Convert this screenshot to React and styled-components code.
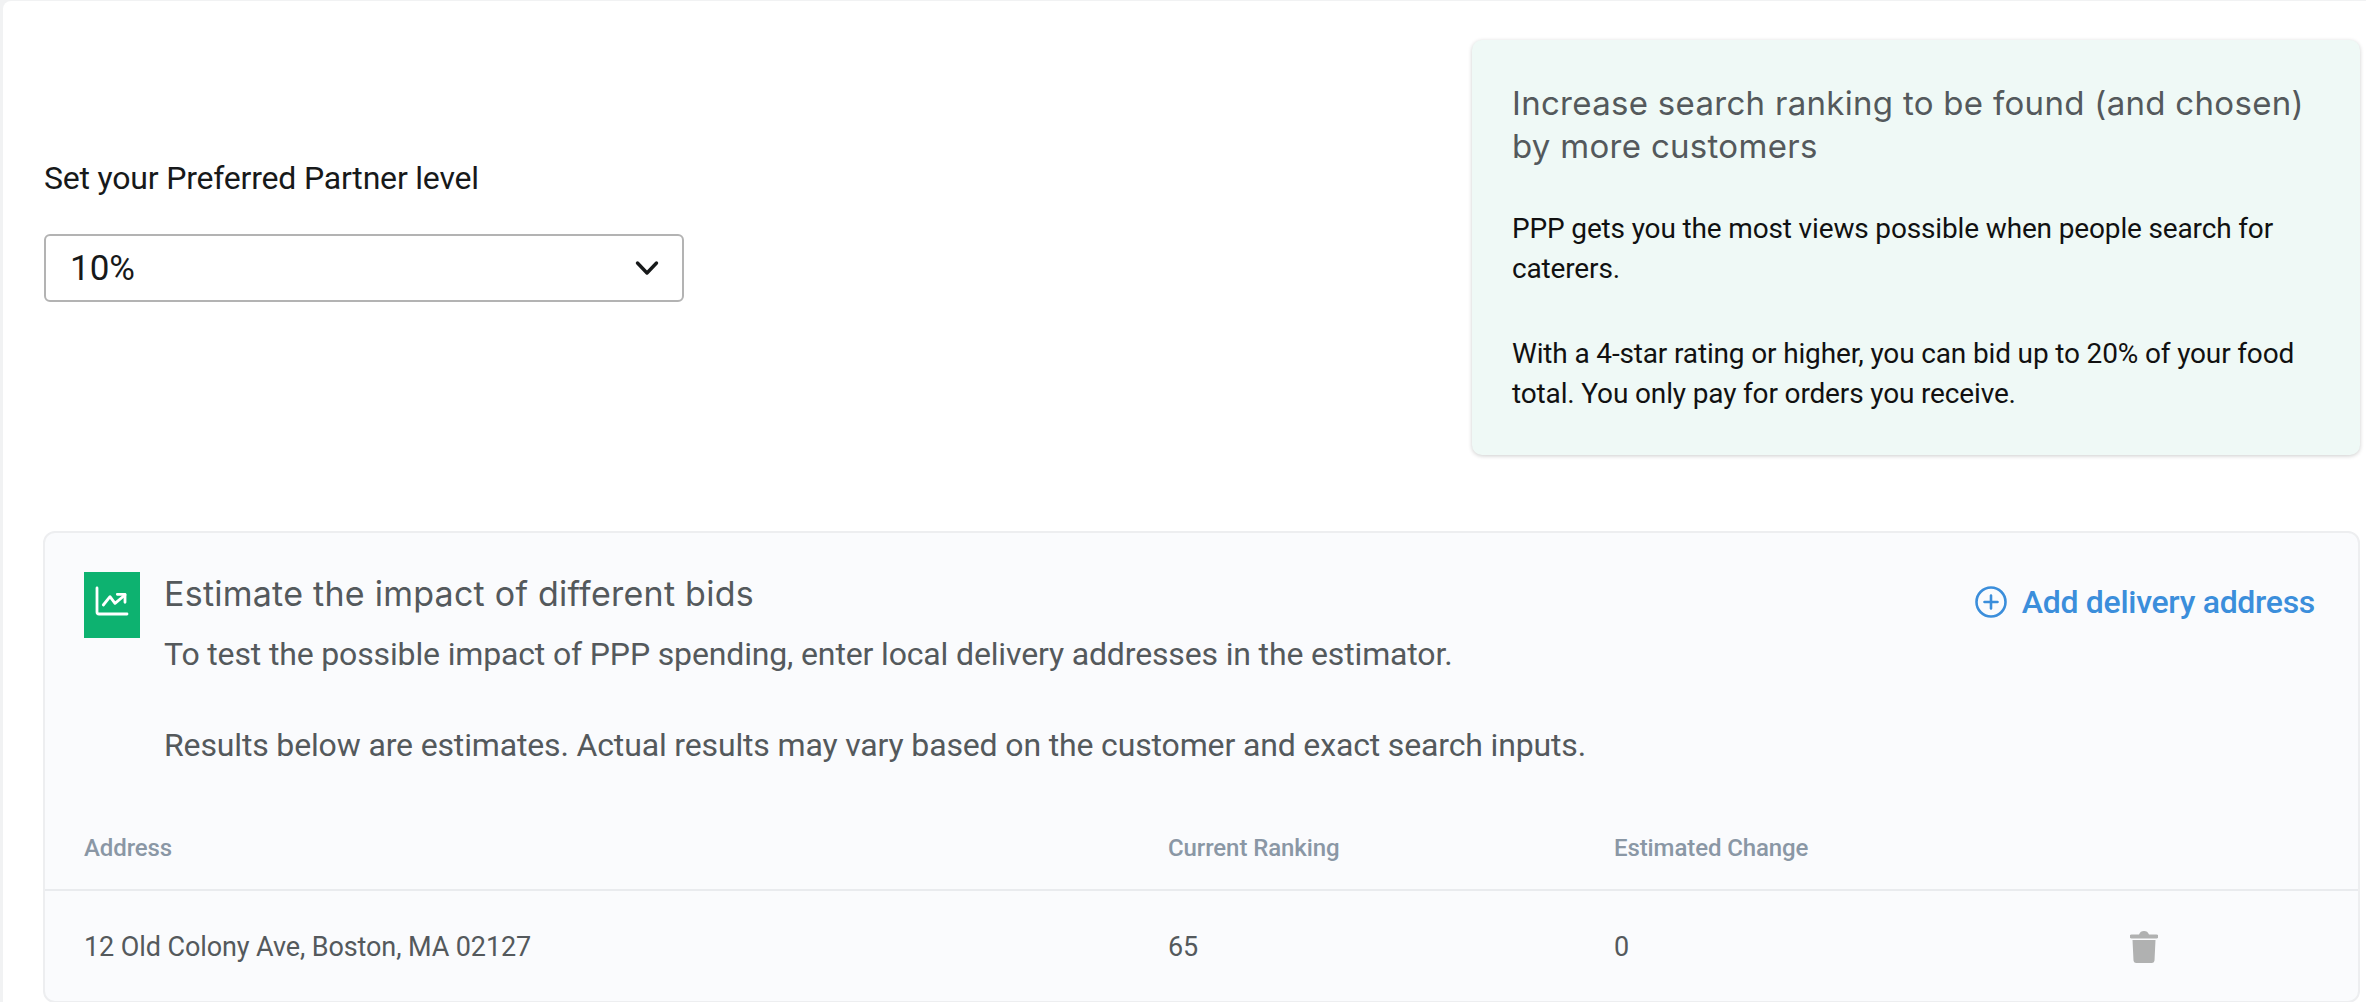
import React from "react";
import styled, { createGlobalStyle } from "styled-components";

const Global = createGlobalStyle`
  html, body { margin: 0; padding: 0; background: #f1f2f3; }
  body { width: 2366px; height: 1002px; overflow: hidden; font-family: Roboto, "Liberation Sans", sans-serif; }
  * { box-sizing: border-box; }
`;

const Page = styled.main`
  margin: 1px 0 0 3px;
  height: 1001px;
  background: #fff;
  border-radius: 8px 0 0 0;
  padding: 39px 6px 0 40px;
  overflow: hidden;
`;

const Hero = styled.section`
  display: flex;
  justify-content: space-between;
  align-items: flex-start;
`;

const LevelForm = styled.div`
  width: 641px;
  padding: 117px 0 0 1px;
`;

const Label = styled.label`
  display: block;
  font-size: 32px;
  letter-spacing: -0.2px;
  line-height: 42px;
  color: #17191a;
  margin-bottom: 35px;
`;

const Select = styled.div`
  height: 68px;
  border: 2px solid #b3b3b3;
  border-radius: 6px;
  display: flex;
  align-items: center;
  justify-content: space-between;
  padding: 0 23px 0 24px;
  font-size: 35px;
  color: #17191a;
`;

const InfoCard = styled.aside`
  width: 888px;
  height: 415px;
  background: #eff9f6;
  border-radius: 10px;
  box-shadow: 0 1px 4px rgba(0, 0, 0, 0.2);
  padding: 42px 40px 0 40px;
`;

const InfoTitle = styled.h2`
  margin: 0 0 41px;
  font-family: Inter, "Noto Sans", sans-serif;
  font-weight: 400;
  font-size: 33px;
  letter-spacing: 0.3px;
  line-height: 43px;
  color: #54595c;
`;

const InfoText = styled.p`
  margin: 0 0 45px;
  font-size: 28px;
  letter-spacing: -0.15px;
  line-height: 40px;
  color: #111;
`;

const Estimator = styled.section`
  margin-top: 76px;
  background: #fafbfd;
  border: 2px solid #edeef0;
  border-radius: 12px;
  height: 472px;
  padding-top: 39px;
  overflow: hidden;
`;

const Head = styled.header`
  display: flex;
  align-items: flex-start;
  padding: 0 43px 1px 39px;
`;

const IconBox = styled.div`
  width: 56px;
  height: 66px;
  background: #0db270;
  flex: none;
  display: flex;
  align-items: center;
  justify-content: center;
  padding-bottom: 8px;
  margin-right: 24px;
`;

const HeadText = styled.div`
  flex: 1;
`;

const Title = styled.h3`
  margin: 0 0 15px;
  font-family: Inter, "Noto Sans", sans-serif;
  font-weight: 400;
  font-size: 34px;
  letter-spacing: 0.25px;
  line-height: 44px;
  color: #54595c;
`;

const Desc = styled.p`
  margin: 0 0 45px;
  font-size: 32px;
  letter-spacing: -0.15px;
  line-height: 46px;
  color: #54595c;
`;

const AddButton = styled.button`
  display: flex;
  align-items: center;
  gap: 15px;
  border: 0;
  background: none;
  padding: 0;
  margin-top: 8px;
  font-family: Roboto, sans-serif;
  font-weight: 500;
  font-size: 32px;
  letter-spacing: -0.3px;
  line-height: 44px;
  color: #3b8edb;
`;

const Row = styled.div`
  display: grid;
  grid-template-columns: 1084px 446px 516px 1fr;
  align-items: center;
  padding: 0 0 ${(p) => p.$pad || 0}px 39px;
  height: ${(p) => p.$h}px;
  color: ${(p) => p.$color};
  font-size: ${(p) => p.$size}px;
  font-weight: ${(p) => p.$weight};
  letter-spacing: -0.1px;
  border-bottom: ${(p) => (p.$line ? "2px solid #e9ebee" : "0")};
`;

const Trash = styled.svg`
  display: block;
`;

export default function App() {
  return (
    <>
      <Global />
      <Page>
        <Hero>
          <LevelForm>
            <Label>Set your Preferred Partner level</Label>
            <Select>
              10%
              <svg width="24" height="16" viewBox="0 0 24 16" fill="none" stroke="#17191a" strokeWidth="3.4" strokeLinecap="round" strokeLinejoin="round">
                <path d="M2.5 3 12 13 21.5 3" />
              </svg>
            </Select>
          </LevelForm>
          <InfoCard>
            <InfoTitle>Increase search ranking to be found (and chosen) by more customers</InfoTitle>
            <InfoText>PPP gets you the most views possible when people search for caterers.</InfoText>
            <InfoText>With a 4-star rating or higher, you can bid up to 20% of your food total. You only pay for orders you receive.</InfoText>
          </InfoCard>
        </Hero>
        <Estimator>
          <Head>
            <IconBox>
              <svg width="34" height="30" viewBox="0 0 34 30" fill="none" stroke="#fff" strokeWidth="2.8" strokeLinecap="round" strokeLinejoin="round">
                <path d="M2 2v24a2 2 0 0 0 2 2h28" />
                <path d="M8.3 19 15 10.7l5 6.6L30 9" />
                <path d="M22.3 8.3H30v8" />
              </svg>
            </IconBox>
            <HeadText>
              <Title>Estimate the impact of different bids</Title>
              <Desc>To test the possible impact of PPP spending, enter local delivery addresses in the estimator.</Desc>
              <Desc>Results below are estimates. Actual results may vary based on the customer and exact search inputs.</Desc>
            </HeadText>
            <AddButton>
              <svg width="32" height="32" viewBox="0 0 32 32" fill="none" stroke="#3b8edb" strokeWidth="2.6" strokeLinecap="round">
                <circle cx="16" cy="16" r="14.5" />
                <path d="M16 9.5v13M9.5 16h13" />
              </svg>
              Add delivery address
            </AddButton>
          </Head>
          <Row $h={77} $pad={8} $color="#8a97a5" $size={24} $weight={500} $line>
            <span>Address</span>
            <span>Current Ranking</span>
            <span>Estimated Change</span>
            <span />
          </Row>
          <Row $h={111} $color="#54595c" $size={27} $weight={400}>
            <span>12 Old Colony Ave, Boston, MA 02127</span>
            <span>65</span>
            <span>0</span>
            <Trash width="28" height="32" viewBox="0 0 28 32" fill="#b0b1b1">
              <path d="M1.5 3.5H9C10 1 11.5 0 14 0s4 1 5 3.5h7.5a1.9 1.9 0 0 1 0 3.9h-25a1.9 1.9 0 0 1 0-3.9z" />
              <path d="M2.5 9h23l-1 20.5A2.6 2.6 0 0 1 22 32H6a2.6 2.6 0 0 1-2.5-2.5z" />
            </Trash>
          </Row>
        </Estimator>
      </Page>
    </>
  );
}
